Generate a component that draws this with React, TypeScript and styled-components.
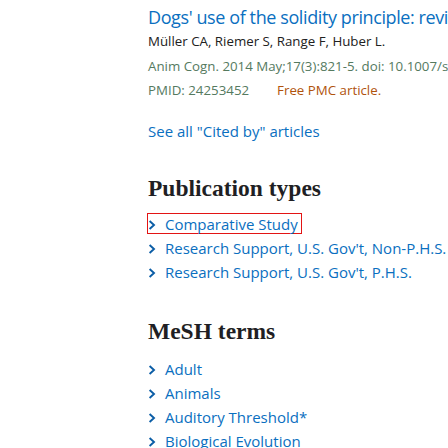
import React from "react";
import styled, { createGlobalStyle } from "styled-components";

const Global = createGlobalStyle`
  html, body { margin: 0; padding: 0; background: #ffffff; }
  body { font-family: "Open Sans", "Noto Sans", sans-serif; overflow: hidden; }
`;

const Page = styled.div`
  width: 448px;
  height: 448px;
  overflow: hidden;
  padding: 5px 0 0 148px;
  box-sizing: border-box;
`;

const Column = styled.div`
  width: 420px;
  display: flex;
  flex-direction: column;
  align-items: flex-start;
`;

const Citation = styled.div`
  display: flex;
  flex-direction: column;
`;

const Title = styled.a`
  font-size: 18px;
  letter-spacing: -0.4px;
  line-height: 25px;
  color: #0a6fc0;
  white-space: nowrap;
  text-decoration: none;
`;

const Line = styled.div<{ $top: number; $color: string }>`
  margin-top: ${(p) => p.$top}px;
  font-size: 13.3px;
  line-height: 22px;
  color: ${(p) => p.$color};
  white-space: nowrap;
  display: flex;
  gap: 28px;
`;

const Free = styled.span`
  color: #b0530c;
`;

const SeeAll = styled.a`
  margin-top: 20px;
  font-size: 15px;
  line-height: 20px;
  color: #0a6fc0;
  text-decoration: none;
  white-space: nowrap;
`;

const Heading = styled.h2<{ $top: number }>`
  margin: ${(p) => p.$top}px 0 0;
  font-family: "Liberation Serif", "Times New Roman", serif;
  font-size: 23.5px;
  font-weight: 700;
  line-height: 28px;
  color: #1f1f24;
  white-space: nowrap;
`;

const List = styled.ul<{ $top: number }>`
  list-style: none;
  margin: ${(p) => p.$top}px 0 0;
  padding: 0;
  display: flex;
  flex-direction: column;
  align-items: flex-start;
  gap: 3px;
`;

const Item = styled.li`
  display: flex;
`;

const Trigger = styled.button<{ $focused?: boolean }>`
  display: inline-flex;
  align-items: flex-start;
  gap: 9px;
  height: 21px;
  box-sizing: border-box;
  padding: 2px 3px 0 0;
  margin: 0 0 0 -1px;
  border: 1px solid ${(p) => (p.$focused ? "#e31414" : "transparent")};
  background: none;
  font-family: "Open Sans", "Noto Sans", sans-serif;
  font-size: 15px;
  line-height: 17px;
  color: #0a6fc0;
  cursor: pointer;
  white-space: nowrap;
`;

const ChevronSvg = styled.svg`
  flex: none;
  margin-top: 4px;
`;

const Chevron = () => (
  <ChevronSvg width="8" height="10" viewBox="0 0 8 10" aria-hidden>
    <path d="M1.6 1 L6 5 L1.6 9" fill="none" stroke="#0b5da6" strokeWidth="1.9" />
  </ChevronSvg>
);

const pubTypes = [
  "Comparative Study",
  "Research Support, U.S. Gov't, Non-P.H.S.",
  "Research Support, U.S. Gov't, P.H.S.",
];

const mesh = ["Adult", "Animals", "Auditory Threshold*", "Biological Evolution"];

export default function App() {
  return (
    <Page>
      <Global />
      <Column>
        <Citation>
          <Title href="#">Dogs' use of the solidity principle: revisited.</Title>
          <Line $top={0} $color="#212121">Müller CA, Riemer S, Range F, Huber L.</Line>
          <Line $top={3} $color="#557a5f">
            Anim Cogn. 2014 May;17(3):821-5. doi: 10.1007/s10071-013-0709-3.
          </Line>
          <Line $top={2} $color="#557a5f">
            <span>PMID: 24253452</span>
            <Free>Free PMC article.</Free>
          </Line>
        </Citation>
        <SeeAll href="#">See all "Cited by" articles</SeeAll>
        <Heading $top={33}>Publication types</Heading>
        <List $top={11}>
          {pubTypes.map((t, i) => (
            <Item key={t}>
              <Trigger $focused={i === 0}>
                <Chevron />
                {t}
              </Trigger>
            </Item>
          ))}
        </List>
        <Heading $top={35}>MeSH terms</Heading>
        <List $top={13}>
          {mesh.map((t) => (
            <Item key={t}>
              <Trigger>
                <Chevron />
                {t}
              </Trigger>
            </Item>
          ))}
        </List>
      </Column>
    </Page>
  );
}
